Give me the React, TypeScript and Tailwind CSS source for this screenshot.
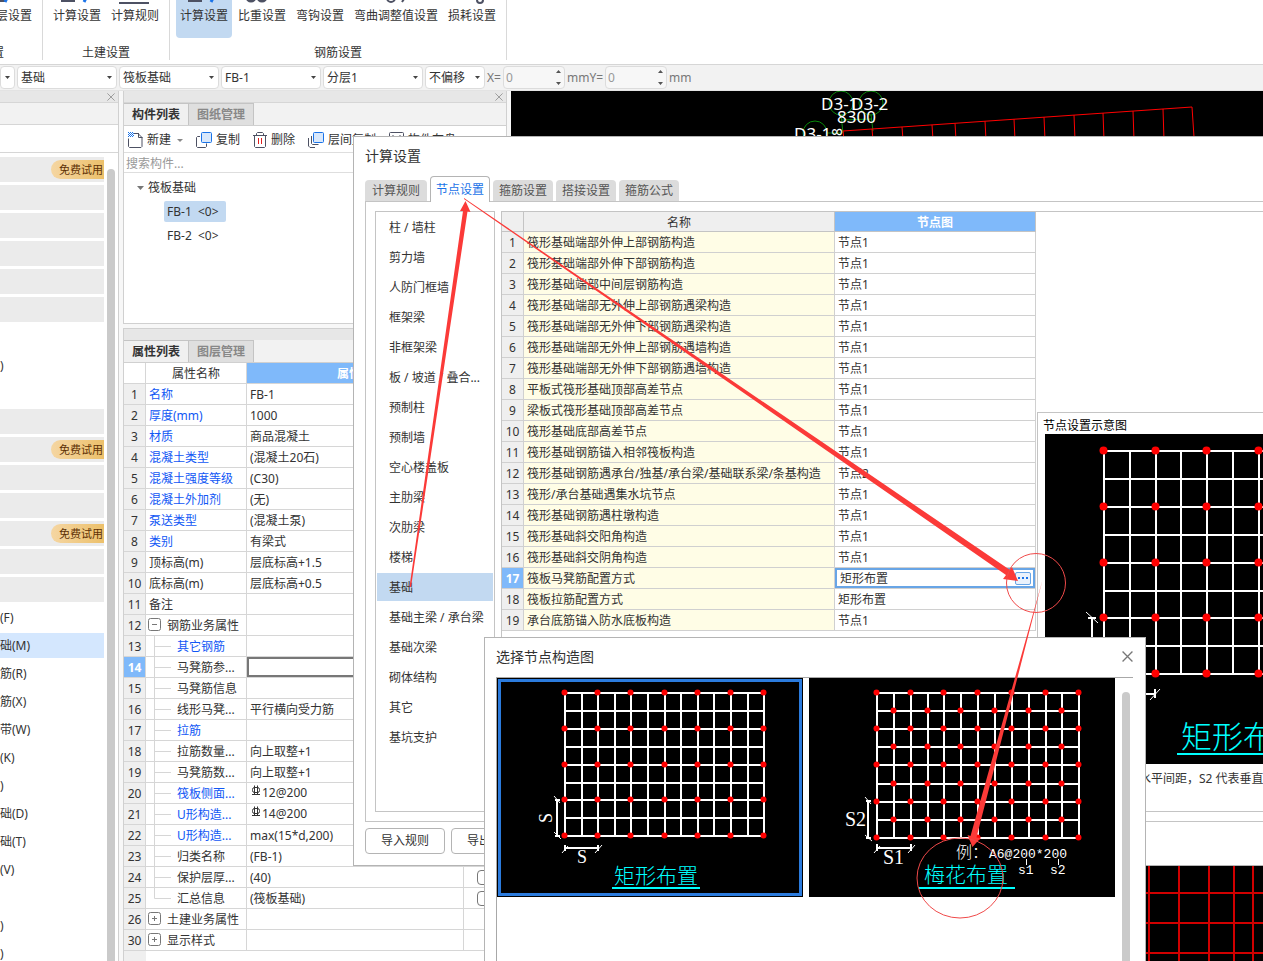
import { Fragment, type ReactNode } from 'react'

type Prop = {
  no: number
  name: string
  value?: string
  link?: boolean
  child?: boolean
  toggle?: '+' | '-'
  rebar?: boolean
  check?: boolean
}

const props: Prop[] = [
  { no: 1, name: '名称', value: 'FB-1', link: true },
  { no: 2, name: '厚度(mm)', value: '1000', link: true },
  { no: 3, name: '材质', value: '商品混凝土', link: true },
  { no: 4, name: '混凝土类型', value: '(混凝土20石)', link: true },
  { no: 5, name: '混凝土强度等级', value: '(C30)', link: true },
  { no: 6, name: '混凝土外加剂', value: '(无)', link: true },
  { no: 7, name: '泵送类型', value: '(混凝土泵)', link: true },
  { no: 8, name: '类别', value: '有梁式', link: true },
  { no: 9, name: '顶标高(m)', value: '层底标高+1.5' },
  { no: 10, name: '底标高(m)', value: '层底标高+0.5' },
  { no: 11, name: '备注' },
  { no: 12, name: '钢筋业务属性', toggle: '-' },
  { no: 13, name: '其它钢筋', link: true, child: true },
  { no: 14, name: '马凳筋参...', child: true },
  { no: 15, name: '马凳筋信息', child: true },
  { no: 16, name: '线形马凳...', value: '平行横向受力筋', child: true },
  { no: 17, name: '拉筋', link: true, child: true },
  { no: 18, name: '拉筋数量...', value: '向上取整+1', child: true },
  { no: 19, name: '马凳筋数...', value: '向上取整+1', child: true },
  { no: 20, name: '筏板侧面...', value: '12@200', link: true, child: true, rebar: true },
  { no: 21, name: 'U形构造...', value: '14@200', link: true, child: true, rebar: true },
  { no: 22, name: 'U形构造...', value: 'max(15*d,200)', link: true, child: true },
  { no: 23, name: '归类名称', value: '(FB-1)', child: true },
  { no: 24, name: '保护层厚...', value: '(40)', child: true, check: true },
  { no: 25, name: '汇总信息', value: '(筏板基础)', child: true, check: true },
  { no: 26, name: '土建业务属性', toggle: '+' },
  { no: 30, name: '显示样式', toggle: '+' },
]

const nodeRows: [string, string][] = [
  ['筏形基础端部外伸上部钢筋构造', '节点1'],
  ['筏形基础端部外伸下部钢筋构造', '节点1'],
  ['筏形基础端部中间层钢筋构造', '节点1'],
  ['筏形基础端部无外伸上部钢筋遇梁构造', '节点1'],
  ['筏形基础端部无外伸下部钢筋遇梁构造', '节点1'],
  ['筏形基础端部无外伸上部钢筋遇墙构造', '节点1'],
  ['筏形基础端部无外伸下部钢筋遇墙构造', '节点1'],
  ['平板式筏形基础顶部高差节点', '节点1'],
  ['梁板式筏形基础顶部高差节点', '节点1'],
  ['筏形基础底部高差节点', '节点1'],
  ['筏形基础钢筋锚入相邻筏板构造', '节点1'],
  ['筏形基础钢筋遇承台/独基/承台梁/基础联系梁/条基构造', '节点2'],
  ['筏形/承台基础遇集水坑节点', '节点1'],
  ['筏形基础钢筋遇柱墩构造', '节点1'],
  ['筏形基础斜交阳角构造', '节点1'],
  ['筏形基础斜交阴角构造', '节点1'],
  ['筏板马凳筋配置方式', '矩形布置'],
  ['筏板拉筋配置方式', '矩形布置'],
  ['承台底筋锚入防水底板构造', '节点1'],
]

const categories = [
  '柱 / 墙柱', '剪力墙', '人防门框墙', '框架梁', '非框架梁', '板 / 坡道 / 叠合...', '预制柱', '预制墙', '空心楼盖板',
  '主肋梁', '次肋梁', '楼梯', '基础', '基础主梁 / 承台梁', '基础次梁', '砌体结构', '其它', '基坑支护',
]

// 'bar' 分组条, 'trial' 带试用标签的分组条, 其余为菜单文字
const sideRows = [
  'trial', 'bar', 'bar', 'bar', 'bar', 'bar', '', ')', '', 'bar', 'trial', 'bar', 'bar', 'trial', 'bar', 'bar',
  '(F)', '础(M)', '筋(R)', '筋(X)', '带(W)', '(K)', ')', '础(D)', '础(T)', '(V)', '', ')', ')',
]

function Close({ size = 8, color = '#9a9a9a' }: { size?: number; color?: string }) {
  return (
    <svg width={size} height={size} viewBox="0 0 10 10" stroke={color} strokeWidth="1.2">
      <path d="M0.5 0.5 9.5 9.5M9.5 0.5 0.5 9.5" />
    </svg>
  )
}

function RibbonButton({ label, active, children }: { label: string; active?: boolean; children?: ReactNode }) {
  return (
    <button className={`flex h-[38px] shrink-0 flex-col rounded-b px-1 ${active ? 'bg-[#c2d9f1]' : ''}`}>
      <svg className="h-1.5 w-0 min-w-full" fill="none" stroke="#4d5163" strokeWidth="2">
        {children}
      </svg>
      <span className="leading-5 whitespace-nowrap">{label}</span>
    </button>
  )
}

function CalcIcon() {
  return (
    <>
      <path d="M9 0v1h12v-1" />
      <path d="M33 -2l-2 4" stroke="#1a73e8" strokeWidth="3" />
    </>
  )
}

function Ribbon() {
  return (
    <header className="flex h-[65px] shrink-0 border-b border-[#d6d6d6] bg-white">
      <div className="flex h-[60px] w-[43px] shrink-0 flex-col overflow-hidden border-r border-[#d9d9d9]">
        <div className="flex justify-end pr-1.5">
          <RibbonButton label="层设置">
            <path d="M2 1h8" />
            <path d="M11 -2l-2 4" stroke="#1a73e8" strokeWidth="3" />
          </RibbonButton>
        </div>
        <span className="flex w-1 justify-end leading-[30px]">置</span>
      </div>
      <div className="flex h-[60px] shrink-0 flex-col border-r border-[#d9d9d9] px-1.5">
        <div className="flex gap-0.5">
          <RibbonButton label="计算设置"><CalcIcon /></RibbonButton>
          <RibbonButton label="计算规则"><path d="M8 3h30" /></RibbonButton>
        </div>
        <span className="text-center leading-[30px]">土建设置</span>
      </div>
      <div className="flex h-[60px] shrink-0 flex-col border-r border-[#d9d9d9] px-1.5">
        <div className="flex gap-0.5">
          <RibbonButton label="计算设置" active><CalcIcon /></RibbonButton>
          <RibbonButton label="比重设置">
            <path d="M9 -3a4 4 0 0 0 8 0M20 -3a4 4 0 0 0 8 0" strokeWidth="3" />
          </RibbonButton>
          <RibbonButton label="弯钩设置" />
          <RibbonButton label="弯曲调整值设置">
            <path d="M33 -2a4 4 0 0 0 8 0M50 -1l-2 3" />
          </RibbonButton>
          <RibbonButton label="损耗设置">
            <circle cx="32" cy="0" r="3" />
          </RibbonButton>
        </div>
        <span className="text-center leading-[30px]">钢筋设置</span>
      </div>
    </header>
  )
}

function Combo({ value, label, width }: { value: string; label: string; width: string }) {
  return (
    <label className={`relative shrink-0 ${width}`}>
      <select
        aria-label={label}
        className="h-[23px] w-full appearance-none rounded border border-[#dcdcdc] bg-white pl-[3px] leading-[21px] outline-none"
      >
        <option>{value}</option>
      </select>
      <svg className="pointer-events-none absolute top-[10px] right-[5px]" width="5" height="3" fill="#444">
        <path d="M0 0h5L2.5 3z" />
      </svg>
    </label>
  )
}

function Offset({ axis }: { axis: string }) {
  return (
    <label className="flex items-center gap-0.5 text-[#777]">
      {axis}=
      <span className="relative">
        <input
          defaultValue="0"
          className="h-[23px] w-[62px] rounded border border-[#dcdcdc] bg-[#f7f7f7] pl-0.5 text-[#999] outline-none"
        />
        <svg className="absolute top-1 right-1" width="5" height="15" fill="#555">
          <path d="M0 3h5L2.5 0zM0 12h5L2.5 15z" />
        </svg>
      </span>
      mm
    </label>
  )
}

function OptionBar() {
  return (
    <div className="flex h-[26px] shrink-0 items-center gap-0.5 overflow-hidden border-b border-[#e3e3e3] bg-[#f2f2f2]">
      <Combo label="楼层" value="" width="w-[15px]" />
      <Combo label="类别" value="基础" width="w-[100px]" />
      <Combo label="构件类型" value="筏板基础" width="w-[100px]" />
      <Combo label="构件" value="FB-1" width="w-[100px]" />
      <Combo label="分层" value="分层1" width="w-[100px]" />
      <Combo label="偏移" value="不偏移" width="w-[60px]" />
      <div className="flex">
        <Offset axis="X" />
        <Offset axis="Y" />
      </div>
    </div>
  )
}

function SideNav() {
  return (
    <nav className="flex w-[119px] shrink-0 flex-col border-r border-[#d0d0d0] bg-white">
      <div className="flex h-3 shrink-0 items-center justify-end border-b border-[#d6d6d6] bg-[#e7e7e7] pr-[3px]"><Close /></div>
      <div className="h-[22px] shrink-0 border-b border-[#d6d6d6] bg-[#f2f2f2]" />
      <div className="h-7 shrink-0 border-b border-[#d6d6d6]" />
      <div className="flex min-h-0 flex-1 justify-between overflow-hidden pr-[3px]">
        <ul className="flex w-[104px] flex-col gap-[3px] pt-1">
          {sideRows.map((row, i) => (
            <li
              key={i}
              className={`flex h-[25px] shrink-0 items-center overflow-hidden whitespace-nowrap ${
                row === 'bar' || row === 'trial' ? 'bg-[#ebebeb]' : row === '础(M)' ? 'bg-[#d4e7fe]' : ''
              }`}
            >
              {row === 'trial' ? (
                <span className="ml-auto w-[53px] rounded-l-full bg-linear-to-r from-[#f5d6a2] to-[#ecc06a] pl-2 text-[11px] leading-[19px] text-[#5e3105]">
                  免费试用
                </span>
              ) : row === 'bar' ? null : (
                <a href="#">{row}</a>
              )}
            </li>
          ))}
        </ul>
        <div className="mt-4 w-2 rounded-t-full bg-[#cacaca]" />
      </div>
    </nav>
  )
}

function PanelTabs({ tabs }: { tabs: string[] }) {
  return (
    <div className="flex h-[23px] shrink-0 border-b border-[#d0d0d0] bg-[#f2f2f2] font-bold">
      {tabs.map((t, i) => (
        <button
          key={t}
          className={`w-[65px] border-t border-r border-[#c4c4c4] leading-[22px] ${i === 0 ? 'bg-[#f0f0f0]' : 'bg-[#dfdfdf] text-[#888]'}`}
        >
          {t}
        </button>
      ))}
    </div>
  )
}

function CopyIcon({ double }: { double?: boolean }) {
  return (
    <svg width="16" height="16" fill="none" stroke="#4d5163">
      <path d={double ? 'M3.5 4v7.5l1 1h6M0.5 6v8l1.500 1.500h5' : 'M4 4.500h-2.500l-1 1v9l1 1h8l1-1v-3'} />
      <rect x="5.500" y="0.500" width="10" height="10" rx="1" fill="#d9e8fb" stroke="#1a73e8" />
    </svg>
  )
}

function ComponentPanel() {
  return (
    <section className="flex h-[233px] shrink-0 flex-col border border-t-0 border-[#d0d0d0] bg-white">
      <div className="flex h-3 shrink-0 items-center justify-end border-b border-[#d6d6d6] bg-[#e7e7e7] pr-[3px]"><Close /></div>
      <PanelTabs tabs={['构件列表', '图纸管理']} />
      <div className="flex h-[27px] shrink-0 items-center gap-[13px] overflow-hidden border-b border-[#dedede] pt-0.5 pl-1 whitespace-nowrap">
        <button className="flex items-center gap-1">
          <svg width="15" height="16" fill="none" stroke="#4d5163">
            <path d="M6 1.500h4l4 4v9l-1 1h-11.500l-1-1v-8M10.500 1v4.500h4" />
            <path d="M0 0.500h5M0 2.500h5M0 4.500h5" stroke="#1a73e8" strokeDasharray="1 1" />
            <path d="M1 1.500h5M1 3.500h5" stroke="#1a73e8" strokeDasharray="1 1" />
          </svg>
          新建
          <svg className="ml-0.5" width="6" height="3" fill="#888"><path d="M0 0h6L3 3z" /></svg>
        </button>
        <button className="flex items-center gap-1"><CopyIcon />复制</button>
        <button className="flex items-center gap-1">
          <svg width="14" height="16" fill="none" stroke="#4d5163">
            <path d="M0 3.500h14M3.500 3v-1.500l1-1h5l1 1v1.500M1.500 4v10.500l1 1h9l1-1v-10.500" />
            <path d="M5.500 6v6M8.500 6v6" stroke="#e02020" />
          </svg>
          删除
        </button>
        <button className="flex items-center gap-1"><CopyIcon double />层间复制</button>
        <button className="flex items-center gap-1">
          <svg width="15" height="16" fill="none" stroke="#4d5163">
            <rect x="0.500" y="0.500" width="14" height="15" rx="1" />
            <path d="M4 3v3h7v-3" />
          </svg>
          构件存盘
        </button>
      </div>
      <input
        aria-label="搜索构件"
        placeholder="搜索构件..."
        className="h-5 shrink-0 border-b border-[#dedede] pt-0.5 pl-0.5 outline-none placeholder:text-[#999]"
      />
      <ul className="flex flex-col pt-0.5">
        <li className="flex h-6 items-center gap-1 pt-0.5 pl-[13px]">
          <svg width="7" height="4" fill="#777"><path d="M0 0h7L3.500 4z" /></svg>
          筏板基础
        </li>
        <li className="flex h-6 items-center pl-10"><span className="w-[62px] rounded-xs bg-[#c2d9f1] px-[3px] leading-[21px]">FB-1 &nbsp;&lt;0&gt;</span></li>
        <li className="flex h-6 items-center pl-10"><span className="w-[62px] px-[3px] leading-[21px]">FB-2 &nbsp;&lt;0&gt;</span></li>
      </ul>
    </section>
  )
}

function Toggle({ sign }: { sign: '+' | '-' }) {
  return (
    <button aria-label={sign === '+' ? '展开' : '收起'} className="mb-0.5 ml-0.5">
      <svg className="block" width="13" height="13" fill="none" stroke="#777">
        <rect x="0.500" y="0.500" width="12" height="12" rx="2" />
        <path d={sign === '+' ? 'M4 6.500h5M6.500 4v5' : 'M4 6.500h5'} />
      </svg>
    </button>
  )
}

function PropertyTable() {
  return (
    <table className="w-full table-fixed border-separate border-spacing-0 bg-white text-left">
      <colgroup>
        <col className="w-[22px]" />
        <col className="w-[101px]" />
        <col className="w-[217px]" />
        <col />
      </colgroup>
      <thead>
        <tr className="h-[21px] [&>th]:border-r [&>th]:border-b [&>th]:border-[#d6d6d6] [&>th]:p-0 [&>th]:pt-0.5 [&>th]:text-center [&>th]:leading-[18px]">
          <th />
          <th className="font-normal">属性名称</th>
          <th className="bg-[#7fb9fa] text-white">属性值</th>
          <th className="font-normal">附加</th>
        </tr>
      </thead>
      <tbody>
        {props.map((p) => (
          <tr key={p.no} className="h-[21px] [&>*]:border-r [&>*]:border-b [&>*]:border-[#d6d6d6] [&>*]:p-0 [&>*]:leading-[18px] [&>th]:pt-0.5">
            <th className={p.no === 14 ? 'bg-[#7fb9fa] text-center text-white' : 'bg-[#efefef] text-center font-normal'}>{p.no}</th>
            <td className={p.link ? 'text-[#1157f5]' : ''}>
              <div className="flex h-5 items-center whitespace-nowrap">
                {p.toggle && <Toggle sign={p.toggle} />}
                {p.child && (
                  <svg className="ml-2" width="17" height="20" stroke="#d6d6d6">
                    <path d={p.no === 25 ? 'M0.500 0v10.500h17' : 'M0.500 0v20M0 10.500h17'} fill="none" />
                  </svg>
                )}
                <span className={p.toggle || p.child ? 'pt-0.5 pl-1.5' : 'pt-0.5 pl-[3px]'}>{p.name}</span>
              </div>
            </td>
            <td>
              <div className={`flex h-5 items-center pl-[3px] ${p.no === 14 ? 'border-2 border-[#777]' : p.rebar ? '' : 'pt-0.5'}`}>
                {p.rebar && (
                  <svg className="mb-1" width="12" height="12" fill="none" stroke="#333">
                    <rect x="2.500" y="2.500" width="7" height="5" rx="2" />
                    <path d="M4.500 0.500v9M7.500 0.500v9M2 9.500h8" />
                  </svg>
                )}
                {p.value}
              </div>
            </td>
            <td>
              {p.check && (
                <input
                  type="checkbox"
                  aria-label={p.name}
                  className="ml-[13px] block size-[15px] appearance-none rounded-sm border border-[#777] bg-white"
                />
              )}
            </td>
          </tr>
        ))}
      </tbody>
    </table>
  )
}

function PropertyPanel() {
  return (
    <section className="flex min-h-0 flex-1 flex-col overflow-hidden border border-b-0 border-[#d0d0d0] bg-white">
      <div className="h-[11px] shrink-0 bg-[#e7e7e7]" />
      <PanelTabs tabs={['属性列表', '图层管理']} />
      <PropertyTable />
      <div className="w-[22px] flex-1 bg-[#efefef]" />
    </section>
  )
}

const beams = [843, 872, 902, 932, 955, 985, 1014, 1044, 1074, 1103, 1133, 1163]

function Canvas() {
  return (
    <div className="min-w-0 flex-1 overflow-hidden bg-black">
      <svg className="size-full" fill="none">
        <g transform="translate(-511 -91)">
          <g stroke="#0a8a0a">
            <circle cx="841" cy="103" r="12" />
            <circle cx="871" cy="103" r="12" />
            <circle cx="815" cy="133" r="12" />
            <path d="M841 115l2 18M871 115l2 16M842 120l30-1M828 133h14" />
          </g>
          <g stroke="#f00">
            <path d="M843 131L1192 107L1194 137" />
            {beams.map((x) => (
              <path key={x} d={`M${x} ${131 - (x - 843) * 0.069}L${x + 1} 140`} />
            ))}
          </g>
          <g fill="#fff" className="font-['Noto_Sans'] text-[17px]">
            <text x="821" y="110">D3-1</text>
            <text x="851" y="110">D3-2</text>
            <text x="837" y="123">8300</text>
            <text x="794" y="140">D3-1</text>
            <text x="842" y="136" transform="rotate(-90 842 136)" fontSize="14">8</text>
          </g>
          <g stroke="#d00000" strokeWidth="2">
            {[1149, 1179, 1209, 1234, 1253].map((x) => (
              <path key={x} d={`M${x} 840V1400`} />
            ))}
            {[893, 923, 953, 983, 1013].map((y) => (
              <path key={y} d={`M1100 ${y}H2400`} />
            ))}
          </g>
        </g>
      </svg>
    </div>
  )
}

type GridProps = { x: number; y: number; dx: number; dy: number; r: number; staggered?: boolean }

// 钢筋网: 13 x 9 根线, 红点为马凳筋位置
function RebarGrid({ x, y, dx, dy, r, staggered }: GridProps) {
  const cols = Array.from({ length: 13 }, (_, i) => Math.round(x + dx * i))
  const rows = Array.from({ length: 9 }, (_, i) => Math.round(y + dy * i))
  return (
    <>
      <g stroke="#fff" strokeWidth="2">
        {cols.map((cx) => <path key={cx} d={`M${cx} ${rows[0]}V${rows[8]}`} />)}
        {rows.map((cy) => <path key={cy} d={`M${cols[0] - 1} ${cy}H${cols[12] + 1}`} />)}
      </g>
      <g fill="#f00">
        {rows.map((cy, j) => (
          <Fragment key={cy}>
            {cols.map((cx, i) => {
              const hit = (i % 2 === 0 && j % 2 === 0) || (staggered && i % 2 === 1 && j % 2 === 1)
              return hit ? <circle key={cx} cx={cx - 0.5} cy={cy - 0.5} r={r} /> : null
            })}
          </Fragment>
        ))}
      </g>
    </>
  )
}

function Dim({ d, ticks }: { d: string; ticks: string }) {
  return (
    <g stroke="#fff" fill="none">
      <path d={d} strokeWidth="2" />
      <path d={ticks} />
    </g>
  )
}

const cadFont = "font-['Liberation_Serif','Noto_Sans_CJK_SC',serif] font-light"

function RectDiagram() {
  return (
    <svg width="306" height="219" className={`block shrink-0 bg-black ${cadFont}`}>
      <RebarGrid x={68} y={15} dx={16.6} dy={17.9} r={3} />
      <Dim d="M60 122v36M58 122h5M58 158h5M68 170h33M68 167v6M101 167v6" ticks="M57 118l6 7M57 154l7 7M65 175l6-7M98 175l7-8" />
      <text x="55" y="145" transform="rotate(-90 55 145)" fill="#fff" className="text-[18px]">S</text>
      <text x="80" y="185" fill="#fff" className="text-[18px]">S</text>
      <text x="117" y="205" fill="#0ff" className="text-[21px]">矩形布置</text>
      <path d="M115 210H203" stroke="#0ff" strokeWidth="2" />
      <rect x="2.500" y="2.500" width="301" height="214" fill="none" stroke="#2b7bdd" strokeWidth="3" />
    </svg>
  )
}

function PlumDiagram() {
  return (
    <svg width="306" height="219" className={`block shrink-0 bg-black ${cadFont}`}>
      <RebarGrid x={68} y={15} dx={16.85} dy={18.1} r={3} staggered />
      <Dim d="M59 123v37M57 123h5M57 160h5M68 170h34M68 166v7M102 166v7" ticks="M56 119l6 7M56 157l7 6M65 175l6-7M99 175l7-8" />
      <g fill="#fff">
        <text x="36" y="148" className="text-[20px]">S2</text>
        <text x="74" y="186" className="text-[20px]">S1</text>
        <text x="147" y="180" className="text-[16px]">例：</text>
        <text x="180" y="180" className="font-['Liberation_Mono'] text-[13px]">A6@200*200</text>
        <text x="209" y="196" className="font-['Liberation_Mono'] text-[13px]">s1</text>
        <text x="241" y="196" className="font-['Liberation_Mono'] text-[13px]">s2</text>
      </g>
      <path d="M217.500 181v6M249.500 181v6" stroke="#fff" />
      <text x="115" y="204" fill="#0ff" className="text-[21px]">梅花布置</text>
      <path d="M110 210H206" stroke="#0ff" strokeWidth="2" />
    </svg>
  )
}

function Preview() {
  return (
    <div className="mt-auto ml-px flex h-[399px] min-w-0 flex-1 flex-col overflow-hidden border-t border-l border-[#c4c4c4] pl-[5px]">
      <h3 className="h-[21px] leading-[26px] text-black">节点设置示意图</h3>
      <svg height="330" className={`ml-0.5 block w-full shrink-0 bg-black ${cadFont}`}>
        <RebarGrid x={59} y={17} dx={25.8} dy={27.9} r={4} />
        <Dim d="M47 184v56M43 184h8M43 240h8M59 260h52M59 255v9M110 255v9" ticks="M41 178l12 11M41 234l12 11M105 266l10-11" />
        <text x="136" y="314" fill="#0ff" className="text-[31px]">矩形布置</text>
        <path d="M132 320H266" stroke="#0ff" strokeWidth="2" />
      </svg>
      <p className="pl-24 leading-[30px] whitespace-nowrap">水平间距，S2 代表垂直</p>
    </div>
  )
}

function NodeTable() {
  return (
    <table className="shrink-0 table-fixed self-start border-separate border-spacing-0 text-left">
      <colgroup>
        <col className="w-[22px]" />
        <col className="w-[311px]" />
        <col className="w-[201px]" />
      </colgroup>
      <thead>
        <tr className="h-5 [&>th]:border-r [&>th]:border-b [&>th]:border-[#c4c4c4] [&>th]:p-0 [&>th]:pt-0.5 [&>th]:text-center [&>th]:leading-[17px]">
          <th className="bg-[#efefef]" />
          <th className="bg-[#efefef] font-normal">名称</th>
          <th className="bg-[#7fb9fa] text-white">节点图</th>
        </tr>
      </thead>
      <tbody>
        {nodeRows.map(([name, node], i) => (
          <tr key={name} className="h-[21px] [&>*]:border-r [&>*]:border-b [&>*]:border-[#d0d0d0] [&>*]:p-0 [&>*]:leading-[18px] [&>th]:pt-0.5">
            <th className={i === 16 ? 'bg-[#7fb9fa] text-center text-white' : 'bg-[#efefef] text-center font-normal'}>{i + 1}</th>
            <td className="bg-[#fffde6]"><div className="pt-0.5 pl-[3px] whitespace-nowrap">{name}</div></td>
            <td>
              {i === 16 ? (
                <div className="flex h-5 items-center justify-between border-2 border-[#68a5e6] pr-0.5 pl-[3px]">
                  <input aria-label={name} defaultValue={node} className="h-4 w-32 pt-0.5 outline-none" />
                  <button aria-label="选择" className="flex h-[13px] w-4 items-center justify-center gap-0.5 rounded-xs border border-[#68a5e6] bg-[#eaf2fc]">
                    <i className="size-0.5 bg-[#1a73e8]" />
                    <i className="size-0.5 bg-[#1a73e8]" />
                    <i className="size-0.5 bg-[#1a73e8]" />
                  </button>
                </div>
              ) : (
                <div className="pt-0.5 pl-[3px]">{node}</div>
              )}
            </td>
          </tr>
        ))}
      </tbody>
    </table>
  )
}

function SettingsDialog() {
  return (
    <section role="dialog" aria-label="计算设置" className="absolute top-[136px] right-0 left-[353px] flex flex-col border border-r-0 border-[#b4b4b4] bg-white pl-[11px]">
      <h2 className="h-[39px] text-sm leading-[38px]">计算设置</h2>
      <div className="flex h-[26px] items-end gap-[3px] border-b border-[#c4c4c4]">
        {['计算规则', '节点设置', '箍筋设置', '搭接设置', '箍筋公式'].map((t) => (
          <button
            key={t}
            className={
              t === '节点设置'
                ? '-mb-px h-[26px] w-[60px] rounded-t border border-b-0 border-[#b4b4b4] bg-white text-[#1a73e8]'
                : 'h-[21px] w-[60px] rounded-t bg-[#dcdcdc] text-[#555] first:w-[62px]'
            }
          >
            {t}
          </button>
        ))}
      </div>
      <div className="flex gap-1.5 border-b border-l border-[#c4c4c4] py-[9px] pl-[9px]">
        <ul className="flex h-[601px] w-[120px] shrink-0 flex-col gap-0.5 border border-[#c4c4c4] p-px">
          {categories.map((c) => (
            <li key={c}>
              <button className={`h-7 w-full pt-0.5 pl-3 text-left whitespace-nowrap ${c === '基础' ? 'bg-[#c2d9f1]' : ''}`}>{c}</button>
            </li>
          ))}
        </ul>
        <div className="flex min-w-0 flex-1 border border-r-0 border-[#c4c4c4]">
          <NodeTable />
          <Preview />
        </div>
      </div>
      <div className="flex h-[43px] items-start gap-1.5 pt-1.5">
        <button className="h-[26px] w-20 rounded border border-[#b4b4b4]">导入规则</button>
        <button className="h-[26px] w-20 rounded border border-[#b4b4b4]">导出规则</button>
      </div>
    </section>
  )
}

function PickerDialog() {
  return (
    <section role="dialog" aria-label="选择节点构造图" className="absolute top-[637px] bottom-0 left-[484px] flex w-[662px] flex-col border border-b-0 border-[#b4b4b4] bg-white pr-3 pl-[11px]">
      <div className="flex h-[39px] shrink-0 items-center justify-between pb-0.5">
        <h2 className="text-sm">选择节点构造图</h2>
        <button aria-label="关闭"><Close size={11} color="#777" /></button>
      </div>
      <div className="flex min-h-0 flex-1 justify-between overflow-hidden border-t border-l border-[#a8a8a8] pr-[3px]">
        <div className="flex gap-1.5">
          <button className="self-start"><RectDiagram /></button>
          <button className="self-start"><PlumDiagram /></button>
        </div>
        <div className="mt-3.5 w-2 rounded-t-full bg-[#cacaca]" />
      </div>
    </section>
  )
}

function Markup() {
  return (
    <svg className="pointer-events-none absolute inset-0 size-full" fill="#fb3a38">
      <path d="M409.500 587L463 211L460 211L465.500 201L470.500 212L467.500 211.500L411 587z" />
      <path d="M464 198L1010 570L1012 567L1018 581L1003 579L1006 575L464 199z" />
      <path d="M1042.500 580L970.500 836L967.500 835L972.500 847L980.500 838L976.500 837.500z" />
      <g fill="none" stroke="#f04a4a">
        <circle cx="1036" cy="583" r="29.500" />
        <ellipse cx="960" cy="878" rx="43" ry="40" />
      </g>
    </svg>
  )
}

export default function App() {
  return (
    <div className="relative flex h-screen flex-col overflow-hidden bg-[#f7f7f7] font-['Noto_Sans','Noto_Sans_CJK_SC',sans-serif] text-xs text-[#333]">
      <Ribbon />
      <OptionBar />
      <main className="flex min-h-0 flex-1 gap-1">
        <SideNav />
        <div className="flex w-[384px] shrink-0 flex-col gap-1">
          <ComponentPanel />
          <PropertyPanel />
        </div>
        <Canvas />
      </main>
      <SettingsDialog />
      <PickerDialog />
      <Markup />
    </div>
  )
}
